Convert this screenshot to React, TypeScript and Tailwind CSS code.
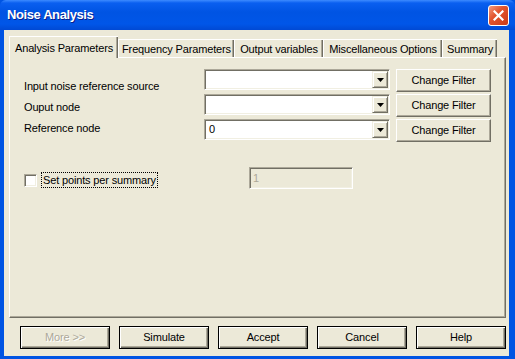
import React from 'react'

const face = "font-['Liberation_Sans',Arial,sans-serif]"

const TABS = [
  { name: 'Analysis Parameters', w: 'w-[109px]', active: true },
  { name: 'Frequency Parameters', w: 'w-[116px]' },
  { name: 'Output variables', w: 'w-[89px]' },
  { name: 'Miscellaneous Options', w: 'w-[119px]' },
  { name: 'Summary', w: 'w-[55px]' },
]

const FOOTER = ['More >>', 'Simulate', 'Accept', 'Cancel', 'Help']

function CloseButton() {
  return (
    <div className="flex h-[21px] w-[21px] items-center justify-center rounded-[3px] border border-white bg-[linear-gradient(135deg,#f39b80_0%,#e2552f_40%,#cc3a16_100%)]">
      <svg width="11" height="11" viewBox="0 0 11 11">
        <path d="M1.5 1.5 L9.5 9.5 M9.5 1.5 L1.5 9.5" stroke="white" strokeWidth="2.2" strokeLinecap="square" />
      </svg>
    </div>
  )
}

function TitleBar() {
  return (
    <div className="flex h-[30px] items-center justify-between rounded-t-[6px] bg-[linear-gradient(to_bottom,#3d8bff_0%,#0a5ff0_10%,#0054e3_40%,#0056e8_80%,#0049d4_100%)] pl-[7px] pr-[6px]">
      <span className={`${face} text-[13px] font-bold tracking-[-0.4px] text-white [text-shadow:1px_1px_0_#0a1e8a]`}>
        Noise Analysis
      </span>
      <CloseButton />
    </div>
  )
}

function Tabs() {
  return (
    <div className="relative z-10 -mb-px ml-[5px] mt-[6px] flex h-[22px] items-end">
      {TABS.map((t) =>
        t.active ? (
          <div
            key={t.name}
            className={`${t.w} flex h-[22px] items-start justify-center border-l border-t border-white bg-[#ece9d8] pt-[3px] shadow-[inset_-1px_0_0_#716f64,inset_-2px_0_0_#aca899]`}
          >
            {t.name}
          </div>
        ) : (
          <div
            key={t.name}
            className={`${t.w} mb-px flex h-[18px] items-center justify-center border-l border-t border-white bg-[#ece9d8] pt-px shadow-[inset_-1px_0_0_#716f64,inset_-2px_0_0_#aca899]`}
          >
            {t.name}
          </div>
        ),
      )}
    </div>
  )
}

function DropArrow() {
  return (
    <div className="flex h-[17px] w-[16px] items-center justify-center border border-b-[#716f64] border-l-[#f1efe2] border-r-[#716f64] border-t-[#f1efe2] bg-[#ece9d8] shadow-[inset_1px_1px_0_#fff,inset_-1px_-1px_0_#aca899]">
      <svg width="7" height="4" viewBox="0 0 7 4">
        <path d="M0 0 H7 L3.5 4 Z" fill="black" />
      </svg>
    </div>
  )
}

function Combo({ value }: { value?: string }) {
  return (
    <div className="flex h-[21px] w-[186px] border border-b-white border-l-[#aca899] border-r-white border-t-[#aca899] bg-white p-px shadow-[inset_1px_1px_0_#716f64,inset_-1px_-1px_0_#f1efe2]">
      <div className="flex flex-1 items-center pl-[3px]">{value}</div>
      <DropArrow />
    </div>
  )
}

function FilterButton() {
  return (
    <div className="flex h-[23px] w-[95px] items-center justify-center border border-b-[#716f64] border-l-white border-r-[#716f64] border-t-white bg-[#ece9d8] shadow-[inset_-1px_-1px_0_#aca899]">
      Change Filter
    </div>
  )
}

function FooterButton({ label }: { label: string }) {
  const disabled = label === 'More >>'
  return (
    <div
      className={`flex h-[23px] w-[90px] items-center justify-center border border-black bg-[#ece9d8] shadow-[inset_1px_1px_0_#fff,inset_-1px_-1px_0_#716f64,inset_-2px_-2px_0_#aca899] ${
        disabled ? 'text-[#aca899] [text-shadow:1px_1px_0_#fff]' : 'text-black'
      }`}
    >
      {label}
    </div>
  )
}

export default function App() {
  return (
    <div className={`${face} flex h-[359px] w-[515px] flex-col bg-[#0054e3] text-[11px] tracking-[-0.15px] text-black`}>
      <TitleBar />
      <div className="mb-[3px] ml-[4px] mr-[6px] flex flex-1 flex-col bg-[#ece9d8]">
        <Tabs />

        <div className="ml-[5px] h-[261px] w-[497px] border border-b-[#716f64] border-l-white border-r-[#716f64] border-t-white shadow-[inset_-1px_-1px_0_#aca899]">
          <div className="flex pl-[14px] pt-[11px]">
            <div className="flex w-[180px] flex-col pt-[7px] leading-[21px]">
              <span>Input noise reference source</span>
              <span>Ouput node</span>
              <span>Reference node</span>
            </div>
            <div className="flex flex-col gap-[2px]">
              {['', '', '0'].map((v, i) => (
                <div key={i} className="flex items-start gap-[6px]">
                  <Combo value={v} />
                  <FilterButton />
                </div>
              ))}
            </div>
          </div>

          <div className="mt-[25px] flex h-[22px] items-center pl-[14px]">
            <div className="flex w-[225px] items-center pt-[4px]">
              <div className="h-[13px] w-[13px] border border-b-white border-l-[#aca899] border-r-white border-t-[#aca899] bg-white shadow-[inset_1px_1px_0_#716f64,inset_-1px_-1px_0_#f1efe2]" />
              <span className="ml-[4px] border border-dotted border-black px-px leading-[14px]">
                Set points per summary
              </span>
            </div>
            <div className="flex h-[22px] w-[104px] items-center border border-b-white border-l-[#aca899] border-r-white border-t-[#aca899] bg-[#ece9d8] pl-[3px] text-[#aca899] shadow-[inset_1px_1px_0_#716f64,inset_-1px_-1px_0_#f1efe2]">
              1
            </div>
          </div>
        </div>

        <div className="ml-[16px] mt-[8px] flex gap-[9px]">
          {FOOTER.map((b) => (
            <FooterButton key={b} label={b} />
          ))}
        </div>
      </div>
    </div>
  )
}
